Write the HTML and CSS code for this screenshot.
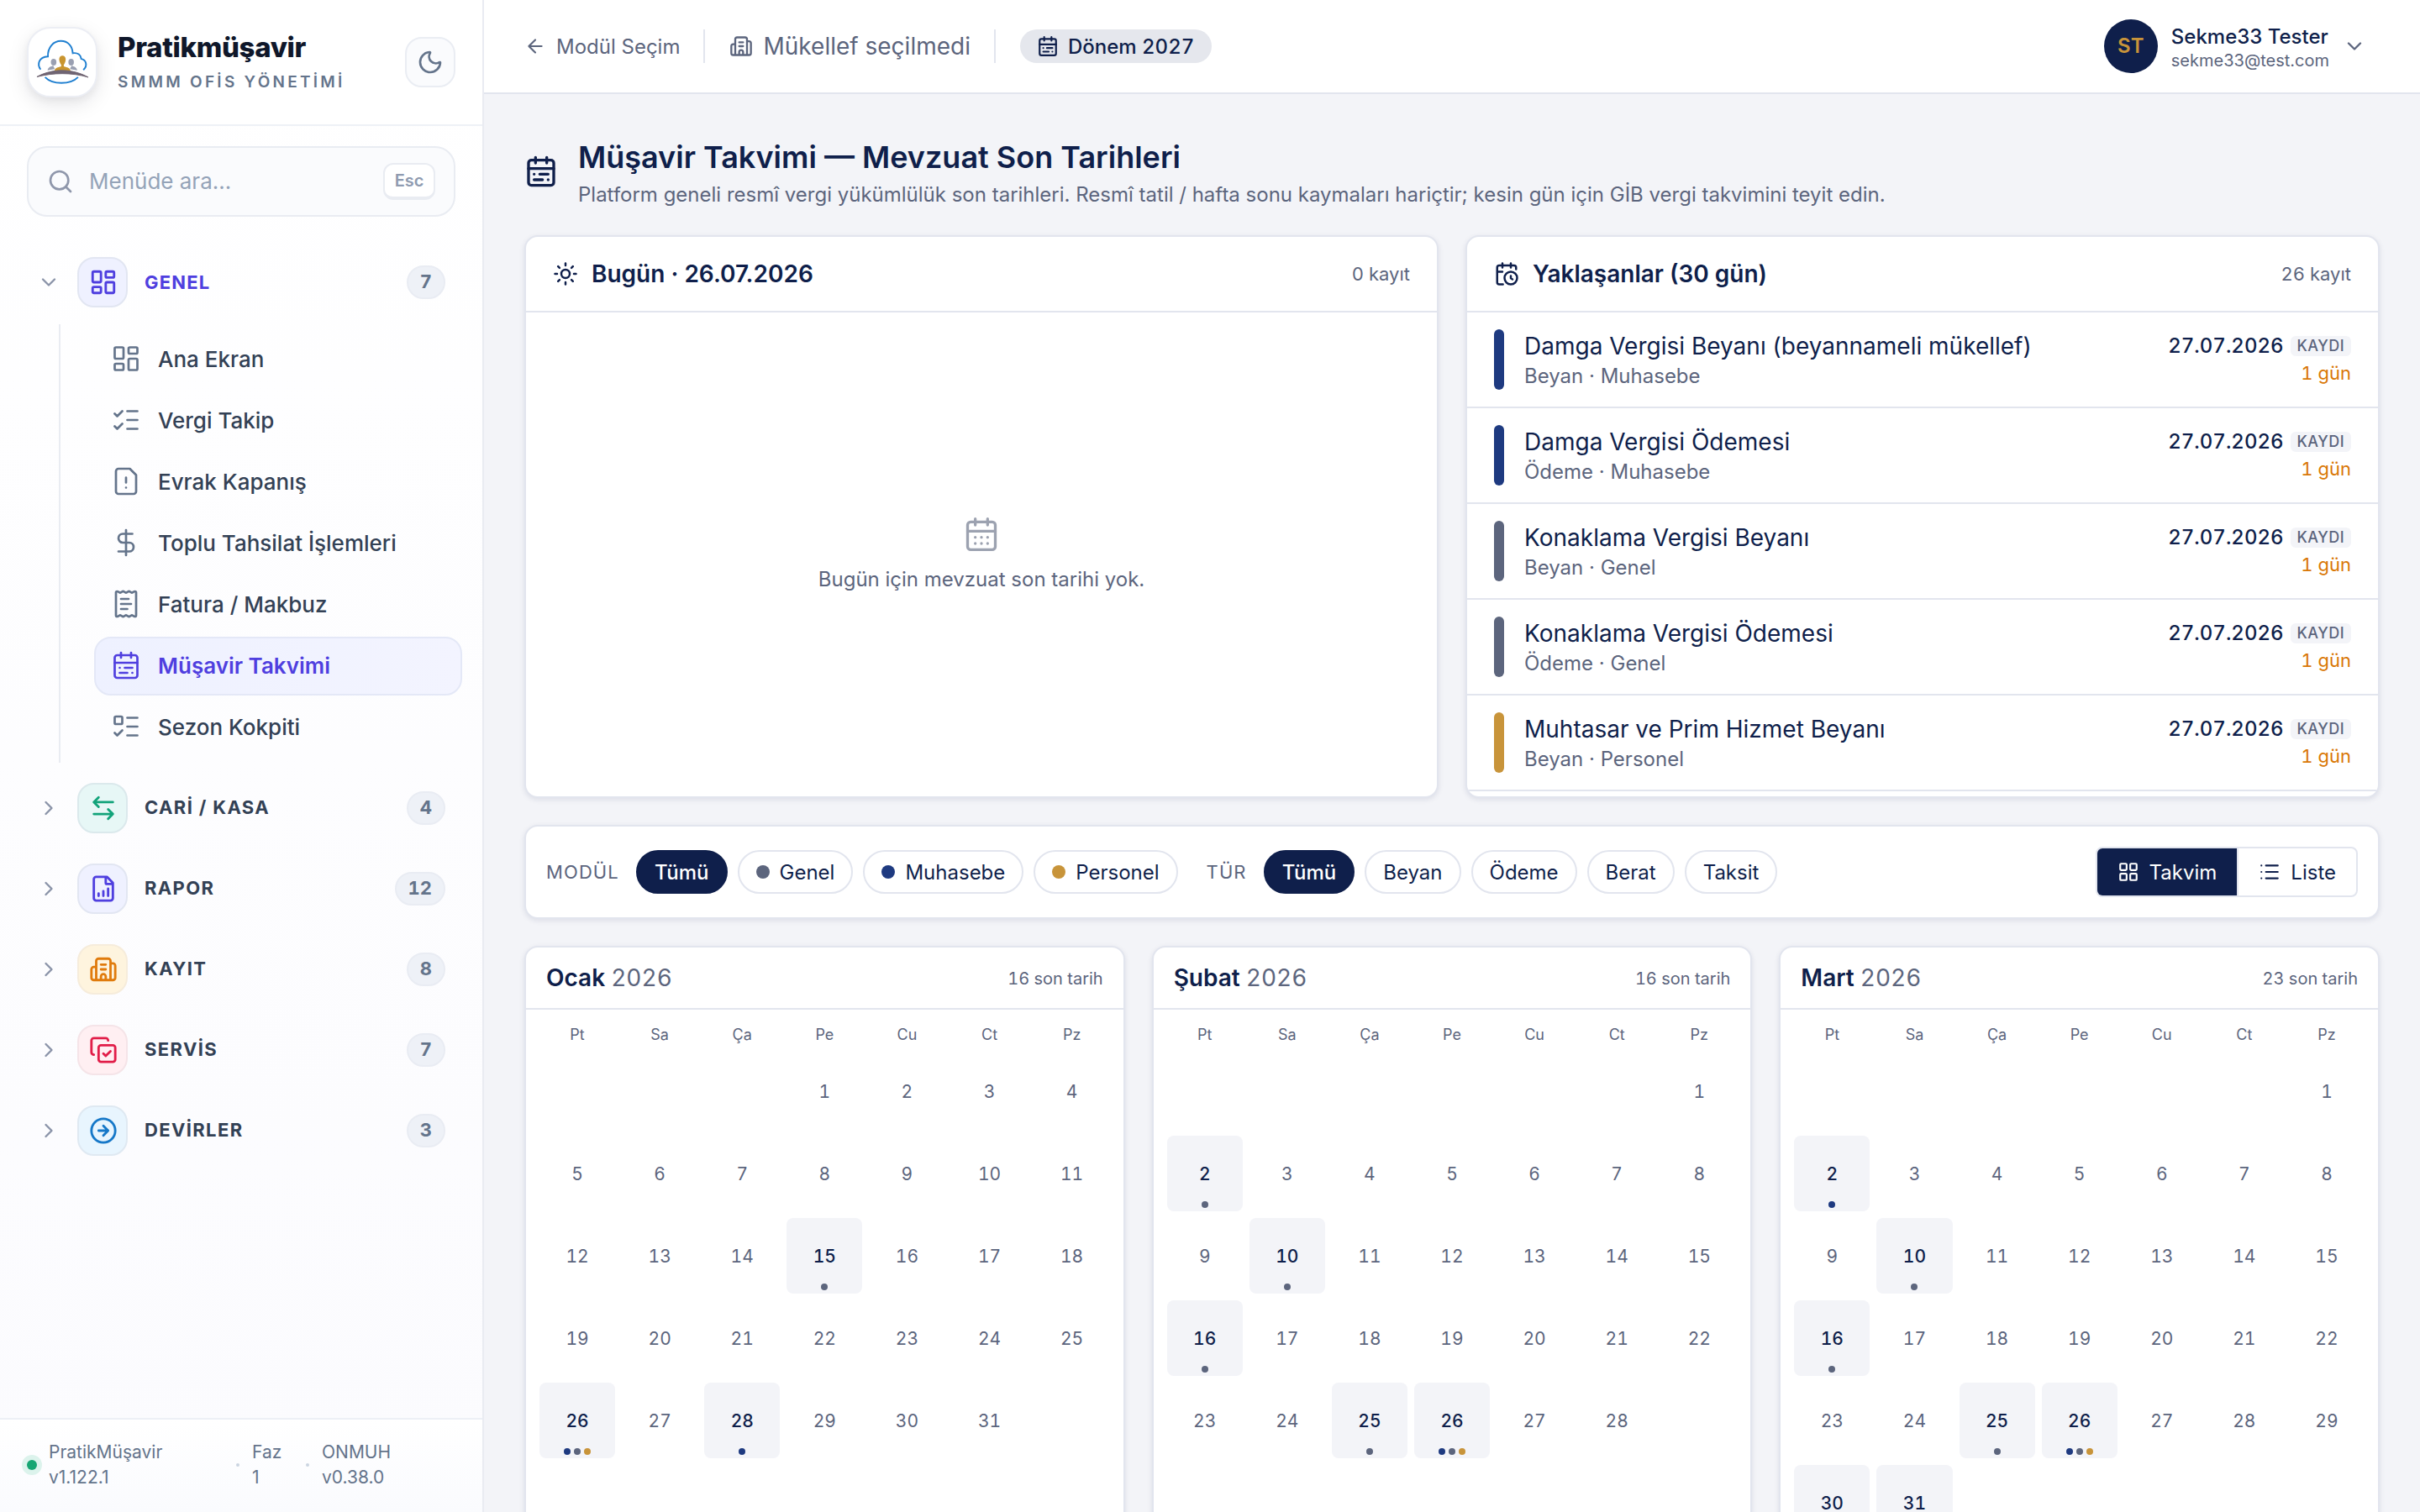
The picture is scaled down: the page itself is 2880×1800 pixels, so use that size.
FILE: index.html
```html
<!DOCTYPE html>
<html lang="tr">
<head>
<meta charset="utf-8">
<title>Müşavir Takvimi</title>
<link rel="stylesheet" href="styles.css">
</head>
<body>
<svg class="sprite" aria-hidden="true">
  <symbol id="dashboard" viewBox="0 0 24 24"><rect width="7" height="9" x="3" y="3" rx="1"/><rect width="7" height="5" x="14" y="3" rx="1"/><rect width="7" height="9" x="14" y="12" rx="1"/><rect width="7" height="5" x="3" y="16" rx="1"/></symbol>
  <symbol id="checks" viewBox="0 0 24 24"><path d="M13 5h8M13 12h8M13 19h8M3 17l2 2 4-4M3 7l2 2 4-4"/></symbol>
  <symbol id="filewarn" viewBox="0 0 24 24"><path d="M15 2H6a2 2 0 0 0-2 2v16a2 2 0 0 0 2 2h12a2 2 0 0 0 2-2V7ZM12 9v4M12 17h.01"/></symbol>
  <symbol id="dollar" viewBox="0 0 24 24"><path d="M12 2v20M17 5H9.5a3.5 3.5 0 0 0 0 7h5a3.5 3.5 0 0 1 0 7H6"/></symbol>
  <symbol id="receipt" viewBox="0 0 24 24"><path d="M4 3a1 1 0 0 1 1-1 1.3 1.3 0 0 1 .7.2l.933.6a1.3 1.3 0 0 0 1.4 0l.934-.6a1.3 1.3 0 0 1 1.4 0l.933.6a1.3 1.3 0 0 0 1.4 0l.933-.6a1.3 1.3 0 0 1 1.4 0l.934.6a1.3 1.3 0 0 0 1.4 0l.933-.6A1.3 1.3 0 0 1 19 2a1 1 0 0 1 1 1v18a1 1 0 0 1-1 1 1.3 1.3 0 0 1-.7-.2l-.933-.6a1.3 1.3 0 0 0-1.4 0l-.934.6a1.3 1.3 0 0 1-1.4 0l-.933-.6a1.3 1.3 0 0 0-1.4 0l-.933.6a1.3 1.3 0 0 1-1.4 0l-.934-.6a1.3 1.3 0 0 0-1.4 0l-.933.6a1.3 1.3 0 0 1-.7.2 1 1 0 0 1-1-1zM14 8H8M16 12H8M13 16H8"/></symbol>
  <symbol id="calrange" viewBox="0 0 24 24"><rect width="18" height="18" x="3" y="4" rx="2"/><path d="M16 2v4M3 10h18M8 2v4M17 14h-6M13 18H7M7 14h.01M17 18h.01"/></symbol>
  <symbol id="caldays" viewBox="0 0 24 24"><rect width="18" height="18" x="3" y="4" rx="2"/><path d="M8 2v4M16 2v4M3 10h18M8 14h.01M12 14h.01M16 14h.01M8 18h.01M12 18h.01M16 18h.01"/></symbol>
  <symbol id="calclock" viewBox="0 0 24 24"><path d="M16 14v2.2l1.6 1M16 2v4M21 7.5V6a2 2 0 0 0-2-2H5a2 2 0 0 0-2 2v14a2 2 0 0 0 2 2h3.5M3 10h5M8 2v4"/><circle cx="16" cy="16" r="6"/></symbol>
  <symbol id="todo" viewBox="0 0 24 24"><path d="M13 5h8M13 12h8M13 19h8M3 17l2 2 4-4"/><rect x="3" y="4" width="6" height="6" rx="1"/></symbol>
  <symbol id="swap" viewBox="0 0 24 24"><path d="M8 3 4 7l4 4M4 7h16M16 21l4-4-4-4M20 17H4"/></symbol>
  <symbol id="filechart" viewBox="0 0 24 24"><path d="M15 2H6a2 2 0 0 0-2 2v16a2 2 0 0 0 2 2h12a2 2 0 0 0 2-2V7ZM14 2v5a1 1 0 0 0 1 1h5M8 18v-2M12 18v-4M16 18v-6"/></symbol>
  <symbol id="building" viewBox="0 0 24 24"><path d="M10 12h4M10 8h4M14 21v-3a2 2 0 0 0-4 0v3M6 10H4a2 2 0 0 0-2 2v7a2 2 0 0 0 2 2h16a2 2 0 0 0 2-2V9a2 2 0 0 0-2-2h-2M6 21V5a2 2 0 0 1 2-2h8a2 2 0 0 1 2 2v16"/></symbol>
  <symbol id="copycheck" viewBox="0 0 24 24"><path d="m12 15 2 2 4-4M4 16c-1.1 0-2-.9-2-2V4c0-1.1.9-2 2-2h10c1.1 0 2 .9 2 2"/><rect width="14" height="14" x="8" y="8" rx="2"/></symbol>
  <symbol id="circlearrow" viewBox="0 0 24 24"><circle cx="12" cy="12" r="10"/><path d="m12 16 4-4-4-4M8 12h8"/></symbol>
  <symbol id="down" viewBox="0 0 24 24"><path d="m6 9 6 6 6-6"/></symbol>
  <symbol id="right" viewBox="0 0 24 24"><path d="m9 18 6-6-6-6"/></symbol>
  <symbol id="left" viewBox="0 0 24 24"><path d="m12 19-7-7 7-7M19 12H5"/></symbol>
  <symbol id="search" viewBox="0 0 24 24"><path d="m21 21-4.34-4.34"/><circle cx="11" cy="11" r="8"/></symbol>
  <symbol id="moon" viewBox="0 0 24 24"><path d="M20.985 12.486a9 9 0 1 1-9.473-9.472c.405-.022.617.46.402.803a6 6 0 0 0 8.268 8.268c.344-.215.825-.004.803.401"/></symbol>
  <symbol id="sun" viewBox="0 0 24 24"><circle cx="12" cy="12" r="4"/><path d="M12 2v2M12 20v2M4.93 4.93l1.41 1.41M17.66 17.66l1.41 1.41M2 12h2M20 12h2M6.34 17.66l-1.41 1.41M19.07 4.93l-1.41 1.41"/></symbol>
  <symbol id="grid" viewBox="0 0 24 24"><rect width="7" height="7" x="3" y="3" rx="1"/><rect width="7" height="7" x="14" y="3" rx="1"/><rect width="7" height="7" x="14" y="14" rx="1"/><rect width="7" height="7" x="3" y="14" rx="1"/></symbol>
  <symbol id="list" viewBox="0 0 24 24"><path d="M3 5h.01M3 12h.01M3 19h.01M8 5h13M8 12h13M8 19h13"/></symbol>
</svg>
<div class="app">
  <aside class="sidebar">
    <header class="brand">
      <div class="logo">
        <svg viewBox="0 0 64 64" fill="none">
          <path d="M5.500 41C1 35 3 25.500 14.500 25C14 14 21 6 30.500 6C39 6 44.500 12 45 21C51 20 55 23 55.500 28C61 29 64 36 58 41.500" stroke="#1f7fd0" stroke-width="2"/>
          <path d="M11 50.500C20 60 42 60 51.500 50.500" stroke="#1f7fd0" stroke-width="2"/>
          <ellipse cx="21.500" cy="32" rx="3.400" ry="4.200" fill="#9aa0b2"/>
          <ellipse cx="43" cy="32" rx="3.400" ry="4.200" fill="#9aa0b2"/>
          <path d="M14 42c1-4 4-4.500 7-5.500l2 4zM50.500 42c-1-4-4-4.500-7-5.500l-2 4z" fill="#9aa0b2"/>
          <path d="M36.300 28.500c0 4-2 6-2.500 7.500l.5 1.500c4 1 7 1.500 8 5H22.500c1-3.500 4-4 8-5l.5-1.500c-.5-1.500-2.700-3.500-2.700-7.500 0-6 8-6 8 0z" fill="#c9952f"/>
          <path d="M1 50C20 39.500 44 39.500 64 50.500C44 44.500 20 45 1 50Z" fill="#6f6472" stroke="#6f6472"/>
        </svg>
      </div>
      <div class="brand-text">
        <div class="brand-name">Pratikmüşavir</div>
        <div class="brand-sub">SMMM OFİS YÖNETİMİ</div>
      </div>
      <div class="theme"><svg class="ic"><use href="#moon"/></svg></div>
    </header>
    <div class="search"><svg class="ic"><use href="#search"/></svg><span>Menüde ara...</span><kbd>Esc</kbd></div>
    <nav class="nav">
      <div class="group open"><svg class="ic chev"><use href="#down"/></svg><span class="tile indigo"><svg class="ic"><use href="#dashboard"/></svg></span><span class="label">GENEL</span><span class="count">7</span></div>
      <div class="sub">
        <div class="item"><svg class="ic"><use href="#dashboard"/></svg>Ana Ekran</div>
        <div class="item"><svg class="ic"><use href="#checks"/></svg>Vergi Takip</div>
        <div class="item"><svg class="ic"><use href="#filewarn"/></svg>Evrak Kapanış</div>
        <div class="item"><svg class="ic"><use href="#dollar"/></svg>Toplu Tahsilat İşlemleri</div>
        <div class="item"><svg class="ic"><use href="#receipt"/></svg>Fatura / Makbuz</div>
        <div class="item active"><svg class="ic"><use href="#calrange"/></svg>Müşavir Takvimi</div>
        <div class="item"><svg class="ic"><use href="#todo"/></svg>Sezon Kokpiti</div>
      </div>
      <div class="group"><svg class="ic chev"><use href="#right"/></svg><span class="tile green"><svg class="ic"><use href="#swap"/></svg></span><span class="label">CARİ / KASA</span><span class="count">4</span></div>
      <div class="group"><svg class="ic chev"><use href="#right"/></svg><span class="tile indigo"><svg class="ic"><use href="#filechart"/></svg></span><span class="label">RAPOR</span><span class="count">12</span></div>
      <div class="group"><svg class="ic chev"><use href="#right"/></svg><span class="tile amber"><svg class="ic"><use href="#building"/></svg></span><span class="label">KAYIT</span><span class="count">8</span></div>
      <div class="group"><svg class="ic chev"><use href="#right"/></svg><span class="tile rose"><svg class="ic"><use href="#copycheck"/></svg></span><span class="label">SERVİS</span><span class="count">7</span></div>
      <div class="group"><svg class="ic chev"><use href="#right"/></svg><span class="tile sky"><svg class="ic"><use href="#circlearrow"/></svg></span><span class="label">DEVİRLER</span><span class="count">3</span></div>
    </nav>
    <footer class="foot">
      <span class="status"></span>
      <span class="ver app-ver">PratikMüşavir v1.122.1</span><span class="sep"></span>
      <span class="ver faz">Faz<br>1</span><span class="sep"></span>
      <span class="ver">ONMUH<br>v0.38.0</span>
    </footer>
  </aside>

  <div class="main">
    <header class="topbar">
      <div class="back"><svg class="ic"><use href="#left"/></svg>Modül Seçim</div>
      <span class="vr"></span>
      <div class="client"><svg class="ic"><use href="#building"/></svg>Mükellef seçilmedi</div>
      <span class="vr"></span>
      <div class="period"><svg class="ic"><use href="#calrange"/></svg>Dönem 2027</div>
      <div class="user">
        <div class="avatar">ST</div>
        <div class="who"><div class="name">Sekme33 Tester</div><div class="mail">sekme33@test.com</div></div>
        <svg class="ic"><use href="#down"/></svg>
      </div>
    </header>

    <main class="page">
      <div class="title">
        <svg class="ic"><use href="#calrange"/></svg>
        <div class="title-text"><h1>Müşavir Takvimi — Mevzuat Son Tarihleri</h1><p>Platform geneli resmî vergi yükümlülük son tarihleri. Resmî tatil / hafta sonu kaymaları hariçtir; kesin gün için GİB vergi takvimini teyit edin.</p></div>
      </div>

      <div class="duo">
        <section class="card">
          <div class="head"><svg class="ic"><use href="#sun"/></svg><h2>Bugün · 26.07.2026</h2><span class="note">0 kayıt</span></div>
          <div class="empty"><svg class="ic"><use href="#caldays"/></svg><p>Bugün için mevzuat son tarihi yok.</p></div>
        </section>
        <section class="card">
          <div class="head"><svg class="ic"><use href="#calclock"/></svg><h2>Yaklaşanlar (30 gün)</h2><span class="note">26 kayıt</span></div>
          <div class="list">
            <div class="row"><span class="bar b"></span><div class="what"><div class="t">Damga Vergisi Beyanı (beyannameli mükellef)</div><div class="s">Beyan · Muhasebe</div></div><div class="when"><div class="date">27.07.2026<span class="tag">KAYDI</span></div><div class="left">1 gün</div></div></div>
            <div class="row"><span class="bar b"></span><div class="what"><div class="t">Damga Vergisi Ödemesi</div><div class="s">Ödeme · Muhasebe</div></div><div class="when"><div class="date">27.07.2026<span class="tag">KAYDI</span></div><div class="left">1 gün</div></div></div>
            <div class="row"><span class="bar g"></span><div class="what"><div class="t">Konaklama Vergisi Beyanı</div><div class="s">Beyan · Genel</div></div><div class="when"><div class="date">27.07.2026<span class="tag">KAYDI</span></div><div class="left">1 gün</div></div></div>
            <div class="row"><span class="bar g"></span><div class="what"><div class="t">Konaklama Vergisi Ödemesi</div><div class="s">Ödeme · Genel</div></div><div class="when"><div class="date">27.07.2026<span class="tag">KAYDI</span></div><div class="left">1 gün</div></div></div>
            <div class="row"><span class="bar o"></span><div class="what"><div class="t">Muhtasar ve Prim Hizmet Beyanı</div><div class="s">Beyan · Personel</div></div><div class="when"><div class="date">27.07.2026<span class="tag">KAYDI</span></div><div class="left">1 gün</div></div></div>
          </div>
        </section>
      </div>

      <section class="card filters">
        <span class="cap">MODÜL</span>
        <span class="chip on">Tümü</span><span class="chip"><i class="g"></i>Genel</span><span class="chip"><i class="b"></i>Muhasebe</span><span class="chip"><i class="o"></i>Personel</span>
        <span class="cap second">TÜR</span>
        <span class="chip on">Tümü</span><span class="chip">Beyan</span><span class="chip">Ödeme</span><span class="chip">Berat</span><span class="chip">Taksit</span>
        <div class="toggle"><span class="on"><svg class="ic"><use href="#grid"/></svg>Takvim</span><span><svg class="ic"><use href="#list"/></svg>Liste</span></div>
      </section>

      <div class="months">
        <section class="card month">
          <div class="mhead"><h3>Ocak <span>2026</span></h3><span class="mnote">16 son tarih</span></div>
          <div class="cal">
            <b>Pt</b><b>Sa</b><b>Ça</b><b>Pe</b><b>Cu</b><b>Ct</b><b>Pz</b>
            <div class="d from4">1</div><div class="d">2</div><div class="d">3</div><div class="d">4</div>
            <div class="d">5</div><div class="d">6</div><div class="d">7</div><div class="d">8</div><div class="d">9</div><div class="d">10</div><div class="d">11</div>
            <div class="d">12</div><div class="d">13</div><div class="d">14</div><div class="d ev">15<span class="dots"><i class="g"></i></span></div><div class="d">16</div><div class="d">17</div><div class="d">18</div>
            <div class="d">19</div><div class="d">20</div><div class="d">21</div><div class="d">22</div><div class="d">23</div><div class="d">24</div><div class="d">25</div>
            <div class="d ev">26<span class="dots"><i class="b"></i><i class="g"></i><i class="o"></i></span></div><div class="d">27</div><div class="d ev">28<span class="dots"><i class="b"></i></span></div><div class="d">29</div><div class="d">30</div><div class="d">31</div>
          </div>
        </section>
        <section class="card month">
          <div class="mhead"><h3>Şubat <span>2026</span></h3><span class="mnote">16 son tarih</span></div>
          <div class="cal">
            <b>Pt</b><b>Sa</b><b>Ça</b><b>Pe</b><b>Cu</b><b>Ct</b><b>Pz</b>
            <div class="d from7">1</div>
            <div class="d ev">2<span class="dots"><i class="g"></i></span></div><div class="d">3</div><div class="d">4</div><div class="d">5</div><div class="d">6</div><div class="d">7</div><div class="d">8</div>
            <div class="d">9</div><div class="d ev">10<span class="dots"><i class="g"></i></span></div><div class="d">11</div><div class="d">12</div><div class="d">13</div><div class="d">14</div><div class="d">15</div>
            <div class="d ev">16<span class="dots"><i class="g"></i></span></div><div class="d">17</div><div class="d">18</div><div class="d">19</div><div class="d">20</div><div class="d">21</div><div class="d">22</div>
            <div class="d">23</div><div class="d">24</div><div class="d ev">25<span class="dots"><i class="g"></i></span></div><div class="d ev">26<span class="dots"><i class="b"></i><i class="g"></i><i class="o"></i></span></div><div class="d">27</div><div class="d">28</div>
          </div>
        </section>
        <section class="card month">
          <div class="mhead"><h3>Mart <span>2026</span></h3><span class="mnote">23 son tarih</span></div>
          <div class="cal">
            <b>Pt</b><b>Sa</b><b>Ça</b><b>Pe</b><b>Cu</b><b>Ct</b><b>Pz</b>
            <div class="d from7">1</div>
            <div class="d ev">2<span class="dots"><i class="b"></i></span></div><div class="d">3</div><div class="d">4</div><div class="d">5</div><div class="d">6</div><div class="d">7</div><div class="d">8</div>
            <div class="d">9</div><div class="d ev">10<span class="dots"><i class="g"></i></span></div><div class="d">11</div><div class="d">12</div><div class="d">13</div><div class="d">14</div><div class="d">15</div>
            <div class="d ev">16<span class="dots"><i class="g"></i></span></div><div class="d">17</div><div class="d">18</div><div class="d">19</div><div class="d">20</div><div class="d">21</div><div class="d">22</div>
            <div class="d">23</div><div class="d">24</div><div class="d ev">25<span class="dots"><i class="g"></i></span></div><div class="d ev">26<span class="dots"><i class="b"></i><i class="g"></i><i class="o"></i></span></div><div class="d">27</div><div class="d">28</div><div class="d">29</div>
            <div class="d ev">30</div><div class="d ev">31</div>
          </div>
        </section>
      </div>
    </main>
  </div>
</div>
</body>
</html>
```
FILE: styles.css
```css
:root {
  --navy: #0f1f4b;
  --muted: #5c657d;
  --line: #e2e5ee;
  --bg: #f3f4f8;
  --blue: #1e3a80;
  --gold: #c8943a;
}
* { box-sizing: border-box; margin: 0; }
html, body { height: 1800px; overflow: hidden; }
body { font-family: Inter, "Liberation Sans", sans-serif; font-size: 24px; color: var(--navy); background: var(--bg); }
.sprite { display: none; }
.ic { flex: none; fill: none; stroke: currentColor; stroke-width: 2; stroke-linecap: round; stroke-linejoin: round; }
.b { background: var(--blue); }
.g { background: var(--muted); }
.o { background: var(--gold); }
.app { display: flex; height: 1800px; overflow: hidden; }

/* Sidebar */
.sidebar { width: 576px; flex: none; display: flex; flex-direction: column; border-right: 2px solid #e9ebf2; background: linear-gradient(#fff, #fbfbfe); }
.brand { height: 150px; flex: none; display: flex; align-items: center; padding: 0 32px; border-bottom: 2px solid #eef1f6; background: #fff; }
.logo { width: 84px; height: 84px; border: 2px solid #eceef4; border-radius: 28px; background: #fff; display: flex; align-items: center; justify-content: center; box-shadow: 0 8px 24px rgba(15, 23, 42, .1), 0 4px 8px rgba(15, 23, 42, .05); }
.logo svg { width: 62px; height: 62px; }
.brand-text { margin-left: 24px; flex: 1; }
.brand-name { font-size: 33px; font-weight: 800; line-height: 40px; letter-spacing: -.01em; color: #0f172a; }
.brand-sub { margin-top: 7px; font-size: 19px; font-weight: 600; line-height: 30px; letter-spacing: .172em; color: #64748b; white-space: nowrap; }
.theme { width: 60px; height: 60px; border: 2px solid #eaedf3; border-radius: 20px; background: #fafbfd; color: #64748b; display: flex; align-items: center; justify-content: center; }
.theme .ic { width: 32px; height: 32px; }
.search { height: 84px; margin: 24px 32px 0; flex: none; display: flex; align-items: center; padding: 0 22px; border: 2px solid #e9ecf2; border-radius: 24px; background: #fafbfd; font-size: 26px; color: #94a3b8; }
.search span { padding-bottom: 2px; }
.search .ic { width: 32px; height: 32px; margin-right: 18px; color: #8f97ab; }
kbd { margin-left: auto; width: 62px; height: 44px; border: 2px solid #e9ecf2; border-bottom-width: 4px; border-radius: 12px; background: #fff; font: 600 20px/38px Inter, sans-serif; text-align: center; color: #8f9bb0; }
.nav { flex: 1; padding: 34px 32px 0 40px; }
.group { height: 88px; margin-bottom: 8px; display: flex; align-items: center; padding-right: 12px; }
.group.open { margin-bottom: 6px; }
.chev { width: 28px; height: 28px; margin: 0 20px 0 4px; color: #8a93a8; }
.tile { width: 60px; height: 60px; border: 2px solid #e2e6f2; border-radius: 20px; display: flex; align-items: center; justify-content: center; padding-left: 2px; }
.tile .ic { width: 34px; height: 34px; }
.indigo { background: #eff1ff; color: #4f3fdf; }
.green { background: #e7f7f6; color: #12a37a; border-color: #dbe9ec; }
.amber { background: #fef4de; color: #e07b0c; border-color: #f6ecdb; }
.rose { background: #ffeff2; color: #e11d48; border-color: #f5e4e8; }
.sky { background: #e8f5fe; color: #1678c8; border-color: #dfe9f2; }
.label { margin-left: 20px; padding-bottom: 3px; flex: 1; font-size: 22px; font-weight: 700; letter-spacing: .062em; color: #334155; }
.open .label { padding-bottom: 0; letter-spacing: .055em; color: #4f3fdf; }
.count { min-width: 46px; height: 40px; padding: 0 14px; border: 2px solid #e9ecf3; border-radius: 20px; background: #eef1f7; font-size: 22px; font-weight: 700; font-variant-numeric: tabular-nums; line-height: 35px; text-align: center; color: #64748b; }
.sub { margin: 0 0 10px 30px; padding: 7px 0 7px 40px; width: 480px; border-left: 2px solid #e9ecf2; display: flex; flex-direction: column; gap: 3px; }
.item { height: 70px; display: flex; align-items: center; padding: 0 0 2px 18px; border: 2px solid transparent; border-radius: 20px; font-size: 26px; font-weight: 500; color: #334155; }
.item .ic { width: 36px; height: 36px; margin-right: 20px; stroke-width: 1.8; color: #64748b; }
.item.active { background: linear-gradient(90deg, #eef1ff, #f3f4ff); border-color: #e4e8f7; color: #4f3fdf; font-weight: 600; }
.item.active .ic { color: #4f3fdf; }
.foot { height: 112px; flex: none; display: flex; align-items: center; padding: 0 0 3px 32px; border-top: 2px solid #edf0f6; background: linear-gradient(#fff, #fafbfe); font-size: 21px; line-height: 30px; color: #64748b; }
.status { width: 12px; height: 12px; border-radius: 50%; background: #17a673; box-shadow: 0 0 0 6px #dcf3ec; margin-right: 14px; }
.app-ver { width: 223px; padding-right: 70px; }
.sep { width: 4px; height: 4px; border-radius: 50%; background: #cbd5e1; }
.faz { margin-left: 15px; width: 64px; }
.faz + .sep { margin-right: 15px; }

/* Top bar */
.main { flex: 1; min-width: 0; }
.topbar { height: 112px; display: flex; align-items: center; padding: 0 64px 0 48px; border-bottom: 2px solid var(--line); background: #fff; color: var(--muted); }
.back, .client, .period, .user { display: flex; align-items: center; white-space: nowrap; }
.back .ic { width: 26px; height: 26px; margin-right: 12px; }
.vr { width: 2px; height: 40px; margin: 0 28px; background: var(--line); }
.client { font-size: 28px; margin-left: 1px; }
.client .ic { width: 28px; height: 28px; margin-right: 12px; }
.period { height: 40px; margin-left: 1px; padding: 0 21px 0 20px; border-radius: 20px; background: #e5e7ed; color: var(--navy); font-weight: 500; font-variant-numeric: tabular-nums; }
.period .ic { width: 26px; height: 26px; margin-right: 11px; }
.user { margin-left: auto; }
.avatar { width: 64px; height: 64px; border-radius: 50%; background: var(--navy); color: var(--gold); font-weight: 600; line-height: 64px; text-align: center; }
.who { margin: 0 16px; padding-top: 3px; }
.name { color: var(--navy); font-weight: 500; line-height: 30px; }
.mail { font-size: 20px; line-height: 26px; }
.user .ic { width: 28px; height: 28px; }

/* Page */
.page { padding: 48px 48px 0; }
.title { display: flex; align-items: center; height: 88px; }
.title .ic { width: 40px; height: 40px; margin-right: 24px; }
.title-text { padding-top: 2px; }
h1 { font-size: 36px; font-weight: 600; line-height: 54px; }
.title p { font-size: 24px; line-height: 36px; color: var(--muted); }
.card { border: 2px solid var(--line); border-radius: 16px; background: #fff; box-shadow: 0 2px 6px rgba(15, 31, 75, .1); overflow: hidden; }
.duo { margin-top: 32px; display: grid; grid-template-columns: 1fr 1fr; gap: 32px; }
.duo .card { height: 670px; display: flex; flex-direction: column; }
.head { height: 90px; flex: none; display: flex; align-items: center; padding: 0 32px; border-bottom: 2px solid var(--line); }
.head .ic { width: 30px; height: 30px; margin-right: 16px; }
h2 { font-size: 28px; font-weight: 600; }
.note { margin-left: auto; font-size: 22px; font-variant-numeric: tabular-nums; color: var(--muted); }
.empty { flex: 1; display: flex; flex-direction: column; align-items: center; justify-content: center; padding-top: 2px; color: var(--muted); }
.empty .ic { width: 44px; height: 44px; margin-bottom: 14px; opacity: .6; stroke-width: 1.8; }
.empty p { line-height: 36px; }
.row { height: 114px; display: flex; align-items: center; padding: 0 32px; border-bottom: 2px solid var(--line); }
.bar { width: 12px; height: 72px; border-radius: 6px; margin-right: 24px; }
.what { flex: 1; padding-top: 2px; }
.t { font-size: 28px; line-height: 36px; }
.s { font-size: 24px; line-height: 35px; color: var(--muted); }
.date { display: flex; align-items: center; font-weight: 500; line-height: 32px; font-variant-numeric: tabular-nums; }
.tag { margin-left: 8px; height: 24px; padding: 0 8px; border-radius: 6px; background: var(--bg); color: var(--muted); font-size: 18px; line-height: 24px; letter-spacing: .025em; }
.left { font-size: 22px; line-height: 33px; text-align: right; font-variant-numeric: tabular-nums; color: #d97706; }
.filters { margin-top: 32px; height: 112px; display: flex; align-items: center; gap: 12px; padding: 0 24px; }
.cap { font-size: 22px; letter-spacing: .05em; color: var(--muted); margin-right: 8px; }
.second { margin-left: 22px; }
.chip { height: 52px; padding: 0 20px; display: flex; align-items: center; border: 2px solid var(--line); border-radius: 26px; }
.chip.on { background: var(--navy); border-color: var(--navy); color: #fff; font-weight: 500; }
.chip i { width: 16px; height: 16px; border-radius: 50%; margin-right: 12px; }
.toggle { margin-left: auto; height: 60px; display: flex; border: 2px solid var(--line); border-radius: 8px; overflow: hidden; }
.toggle span { display: flex; align-items: center; padding: 0 24px; }
.toggle span + span { border-left: 2px solid var(--line); }
.toggle .on { background: var(--navy); color: #fff; }
.toggle .ic { width: 26px; height: 26px; margin-right: 12px; }
.months { margin-top: 32px; display: grid; grid-template-columns: repeat(3, minmax(0, 1fr)); gap: 32px; }
.month { height: 760px; }
.mhead { height: 74px; display: flex; align-items: center; justify-content: space-between; padding: 0 24px; border-bottom: 2px solid var(--line); }
h3 { font-size: 28px; font-weight: 600; }
h3 span { font-weight: 400; font-variant-numeric: tabular-nums; color: var(--muted); }
.mnote { padding-top: 1px; font-size: 20px; font-variant-numeric: tabular-nums; color: var(--muted); }
.cal { display: grid; grid-template-columns: repeat(7, minmax(0, 1fr)); gap: 8px; padding: 16px; }
.cal b { height: 28px; font-size: 18px; font-weight: 400; line-height: 28px; text-align: center; color: var(--muted); }
.d { height: 90px; display: flex; align-items: center; justify-content: center; position: relative; border-radius: 8px; font-size: 21px; font-variant-numeric: tabular-nums; color: var(--muted); }
.from4 { grid-column-start: 4; }
.from7 { grid-column-start: 7; }
.ev { background: var(--bg); color: var(--navy); font-weight: 500; }
.dots { position: absolute; left: 0; right: 0; bottom: 4px; display: flex; justify-content: center; gap: 4px; }
.dots i { width: 8px; height: 8px; border-radius: 50%; }
```
